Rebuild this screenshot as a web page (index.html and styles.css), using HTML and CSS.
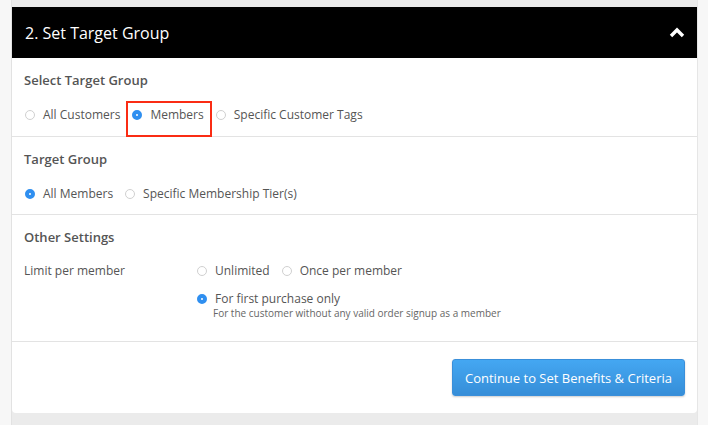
FILE: index.html
```html
<!DOCTYPE html>
<html>
  <head>
    <meta charset="utf-8">
    <title>Set Target Group</title>
    <link rel="stylesheet" href="styles.css">
  </head>
  <body>
    <div class="wrap">
      <div class="card">
        <div class="card-head">
          <h2>2. Set Target Group</h2>
          <svg class="chevron" width="16" height="11" viewBox="0 0 16 11">
            <polyline points="2,9 8,3 14,9" fill="none" stroke="#fff" stroke-width="3.4"/>
          </svg>
        </div>

        <div class="section">
          <h3>Select Target Group</h3>
          <div class="options">
            <label class="radio"><span class="dot"></span>All Customers</label>
            <label class="radio checked marked"><span class="dot"></span>Members</label>
            <label class="radio"><span class="dot"></span>Specific Customer Tags</label>
          </div>
        </div>

        <div class="section section-mid">
          <h3>Target Group</h3>
          <div class="options">
            <label class="radio checked"><span class="dot"></span>All Members</label>
            <label class="radio"><span class="dot"></span>Specific Membership Tier(s)</label>
          </div>
        </div>

        <div class="section section-last">
          <h3 class="title-tight">Other Settings</h3>
          <div class="field">
            <div class="field-label">Limit per member</div>
            <div class="field-body">
              <div class="options">
                <label class="radio"><span class="dot"></span>Unlimited</label>
                <label class="radio"><span class="dot"></span>Once per member</label>
              </div>
              <div class="options options-second">
                <label class="radio checked"><span class="dot"></span>For first purchase only</label>
              </div>
              <p class="hint">For the customer without any valid order signup as a member</p>
            </div>
          </div>
        </div>

        <div class="card-foot">
          <button type="button">Continue to Set Benefits &amp; Criteria</button>
        </div>
      </div>
    </div>
  </body>
</html>
```
FILE: styles.css
```css
body {
  margin: 0;
  background: #f7f7f7;
  font-family: "Open Sans", "Noto Sans", sans-serif;
  color: #555;
  font-size: 12px;
}

.wrap {
  margin-left: 11px;
  width: 687px;
  height: 425px;
  padding-top: 7px;
  box-sizing: border-box;
  background: #ebebeb;
  border-left: 1px solid #e2e2e2;
  border-right: 1px solid #e6e6e6;
}

.card {
  background: #fff;
  border-radius: 0 0 4px 4px;
}

.card-head {
  height: 51px;
  background: #000;
  display: flex;
  align-items: center;
  justify-content: space-between;
  padding: 0 12px 0 13px;
}

.card-head h2 {
  margin: 0;
  color: #fff;
  font-size: 16px;
  font-weight: 400;
}

.section {
  padding: 13px 12px 12px;
  border-bottom: 1px solid #e3e3e3;
}

.section-mid {
  padding-bottom: 11px;
}

.section h3 {
  margin: 0 0 17px;
  font-size: 13px;
  font-weight: 600;
  line-height: 18px;
  color: #555;
}

.section .title-tight {
  margin-bottom: 16px;
}

.options {
  display: flex;
  line-height: 18px;
  padding-left: 1px;
}

.radio {
  position: relative;
  display: flex;
  align-items: center;
  margin-right: 12px;
}

.dot {
  width: 8px;
  height: 8px;
  border: 1px solid #d0d0d0;
  border-radius: 50%;
  margin-right: 8px;
  box-sizing: content-box;
}

.checked .dot {
  width: 2px;
  height: 2px;
  border: 4px solid #2f8ff0;
}

.marked::after {
  content: "";
  position: absolute;
  left: -6px;
  top: -5px;
  right: -8px;
  bottom: -13px;
  border: 2px solid #fa2c14;
}

.section-last {
  padding-bottom: 22px;
}

.field {
  display: flex;
}

.field-label {
  width: 172px;
  line-height: 18px;
}

.options-second {
  margin-top: 10px;
}

.hint {
  margin: -1px 0 0 17px;
  font-size: 10px;
  line-height: 12px;
  color: #666;
}

.card-foot {
  display: flex;
  justify-content: flex-end;
  padding: 17px 12px 17px;
}

.card-foot button {
  height: 37px;
  padding: 0 12px;
  border: 1px solid #3a8fda;
  border-radius: 3px;
  background: linear-gradient(#44a7f2, #368ed8);
  box-shadow: 0 1px 2px rgba(0, 0, 0, 0.2);
  color: #fff;
  font-family: "Open Sans", sans-serif;
  font-size: 13px;
}
```
